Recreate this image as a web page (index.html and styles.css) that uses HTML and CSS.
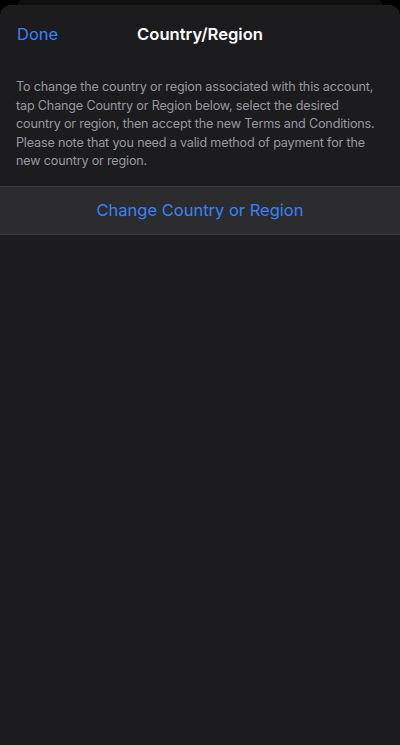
FILE: index.html
```html
<!DOCTYPE html>
<html>
<head>
<meta charset="utf-8">
<link rel="stylesheet" href="styles.css">
</head>
<body>
<div class="backcard"></div>
<div class="sheet">
  <div class="navbar">
    <span class="done">Done</span>
    <span class="title">Country/Region</span>
  </div>
  <p class="note">To change the country or region associated with this account, tap Change Country or Region below, select the desired country or region, then accept the new Terms and Conditions. Please note that you need a valid method of payment for the new country or region.</p>
  <div class="row">Change Country or Region</div>
</div>
</body>
</html>
```
FILE: styles.css
```css
html, body {
  margin: 0;
  padding: 0;
  background: #000;
  height: 745px;
  overflow: hidden;
  font-family: Inter, "Noto Sans", sans-serif;
}
.backcard {
  height: 5px;
  margin: 0 17px;
  background: #0e0e0f;
  border-radius: 8px 8px 0 0;
}
.sheet {
  background: #1c1c1e;
  border-radius: 10px 10px 0 0;
  height: 740px;
}
.navbar {
  position: relative;
  height: 58px;
  display: flex;
  align-items: center;
  justify-content: center;
}
.done {
  position: absolute;
  left: 17px;
  top: 50%;
  transform: translateY(-50%);
  color: #3a82f7;
  font-size: 16.5px;
}
.title {
  color: #fff;
  font-size: 16.6px;
  font-weight: 600;
}
.note {
  margin: 0;
  padding: 15px 16px 15px 16px;
  color: #98989f;
  font-size: 12.6px;
  letter-spacing: -0.17px;
  line-height: 18.5px;
}
.row {
  background: #2c2c2e;
  border-top: 1px solid #3a3a3c;
  border-bottom: 1px solid #3a3a3c;
  height: 47px;
  display: flex;
  align-items: center;
  justify-content: center;
  color: #3a82f7;
  font-size: 16.5px;
}
```
